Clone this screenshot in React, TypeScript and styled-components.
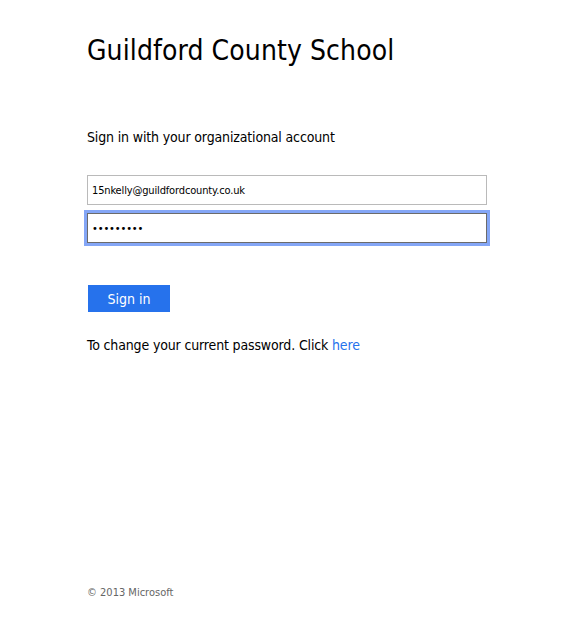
import styled, { createGlobalStyle } from "styled-components";

const GlobalStyle = createGlobalStyle`
  html, body {
    margin: 0;
    padding: 0;
    background: #ffffff;
  }
  body {
    font-family: "DejaVu Sans Condensed", "DejaVu Sans", Verdana, sans-serif;
    color: #000000;
  }
  * {
    box-sizing: border-box;
  }
`;

const Page = styled.div`
  display: flex;
  flex-direction: column;
  min-height: 100vh;
  padding: 34px 0 0 87px;
`;

const Title = styled.h1`
  margin: 0;
  font-size: 28px;
  line-height: 34px;
  font-weight: normal;
  letter-spacing: 0.1px;
`;

const Prompt = styled.div`
  margin-top: 60px;
  font-size: 14px;
  line-height: 18px;
  letter-spacing: -0.15px;
`;

const Form = styled.form`
  display: flex;
  flex-direction: column;
  gap: 8px;
  margin-top: 29px;
  width: 400px;
`;

const Field = styled.input<{ focused?: boolean }>`
  width: 400px;
  height: 30px;
  padding: 0 4px;
  margin: 0;
  font-family: inherit;
  font-size: 11px;
  letter-spacing: -0.15px;
  color: #000000;
  background: #ffffff;
  border: 1px solid ${(props) => (props.focused ? "#6b6b6b" : "#bababa")};
  box-shadow: ${(props) => (props.focused ? "0 0 0 3px #84a6f6" : "none")};
  outline: none;
  border-radius: 0;
`;

const Submit = styled.button`
  width: 82px;
  height: 27px;
  margin-top: 42px;
  margin-left: 1px;
  padding: 0;
  border: none;
  background: #2672ec;
  color: #ffffff;
  font-family: inherit;
  font-size: 14px;
  cursor: pointer;
`;

const Note = styled.p`
  margin: 24px 0 0;
  font-size: 14px;
  line-height: 18px;
  letter-spacing: -0.15px;
`;

const Link = styled.a`
  color: #2672ec;
  text-decoration: none;
`;

const Footer = styled.footer`
  margin-top: auto;
  padding-bottom: 19px;
  font-size: 11px;
  line-height: 14px;
  color: #666666;
`;

const App = () => {
  return (
    <>
      <GlobalStyle />
      <Page>
        <Title>Guildford County School</Title>
        <Prompt>Sign in with your organizational account</Prompt>
        <Form onSubmit={(e) => e.preventDefault()}>
          <Field type="email" defaultValue="15nkelly@guildfordcounty.co.uk" />
          <Field type="password" defaultValue="123456789" focused />
        </Form>
        <Submit type="button">Sign in</Submit>
        <Note>
          To change your current password. Click <Link href="#">here</Link>
        </Note>
        <Footer>© 2013 Microsoft</Footer>
      </Page>
    </>
  );
};

export default App;
